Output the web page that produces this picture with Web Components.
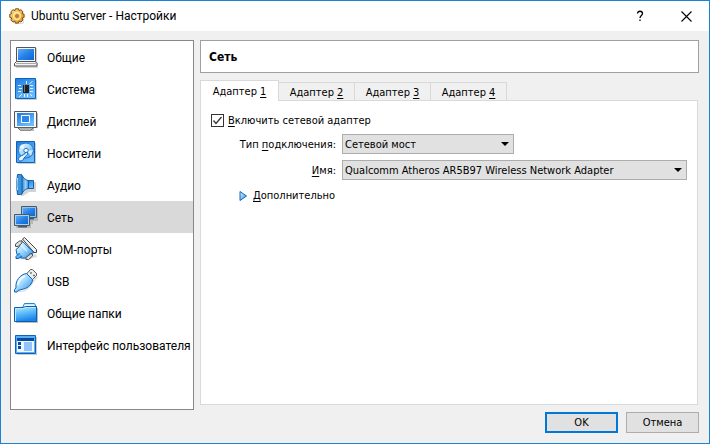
<!DOCTYPE html>
<html lang="ru">
<head>
<meta charset="utf-8">
<title>Ubuntu Server - Настройки</title>
<style>
html, body { height: 100%; margin: 0; }
body { font: 11px/14px "DejaVu Sans Condensed", "DejaVu Sans", sans-serif; color: #000; text-underline-offset: 2px; --ui-font: 12px/16px Roboto, "Noto Sans", sans-serif; }
</style>
</head>
<body>
<settings-window>
  <span slot="title">Ubuntu Server - Настройки</span>
  <nav-list slot="nav">
    <nav-item icon="general">Общие</nav-item>
    <nav-item icon="system">Система</nav-item>
    <nav-item icon="display">Дисплей</nav-item>
    <nav-item icon="storage">Носители</nav-item>
    <nav-item icon="audio">Аудио</nav-item>
    <nav-item icon="network" selected>Сеть</nav-item>
    <nav-item icon="serial">COM-порты</nav-item>
    <nav-item icon="usb">USB</nav-item>
    <nav-item icon="folder">Общие папки</nav-item>
    <nav-item icon="ui">Интерфейс пользователя</nav-item>
  </nav-list>
  <page-title>Сеть</page-title>
  <tab-panel>
    <tab-button slot="tabs" selected>Адаптер <u>1</u></tab-button>
    <tab-button slot="tabs">Адаптер <u>2</u></tab-button>
    <tab-button slot="tabs">Адаптер <u>3</u></tab-button>
    <tab-button slot="tabs">Адаптер <u>4</u></tab-button>
    <adapter-form></adapter-form>
  </tab-panel>
  <push-button slot="actions" primary>OK</push-button>
  <push-button slot="actions">Отмена</push-button>
</settings-window>

<script>
const ICONS = {
  gear: `<path fill="#bbb" d="M5 15h8l2-3v3l-2 1H6z" opacity=".6"/><g stroke="#7a4a12" stroke-width="1"><path fill="url(#o)" d="M6.500.8h3l.5 1.800 1.800-.9 2.200 2.100-.9 1.800 2 .6v3.200l-1.900.6.9 1.900-2.200 2.200-1.900-.9-.6 1.900h-3l-.6-1.900-1.800.9-2.200-2.200.9-1.900-1.900-.6V6.200l1.900-.6-.9-1.800L4 1.700l1.900.9z"/><circle cx="8" cy="8" r="3.400" fill="none" stroke="#ffe9a8" stroke-width="1.500"/><circle cx="8" cy="8" r="1.200" fill="#fff3cf"/></g>`,
  general: `<path fill="#b8b8b8" d="M3 3h20v14l1 1v5H2v-2h1z" opacity=".6"/><path d="M2.500 2.500h19v14h-19z" fill="#fff" stroke="#555"/><path d="M3.500 3.500h17v12h-17z" fill="#dce9f8"/><path d="M4 4h16v11H4z" fill="url(#b)"/><path d="M2.500 16.500h19l1.500 2v2.500H.5v-2.500z" fill="#f4f4f4" stroke="#555"/><path d="M2 18.500h20" stroke="#aaa"/>`,
  system: `<path d="M3 3h20v20H3z" fill="#ccc"/><path d="M1.500 1.500h20v20h-20z" fill="url(#s)" stroke="#0c62bd"/><path d="M9 8h6v8H9z" fill="#222"/><path d="M10 8h1v7h-1z" fill="#777"/><path d="M4 8.500h3M5 11.500h3M4 14.500h3M16 8.500h3M16 11.500h3M16 14.500h3M12.500 4v3M15.500 7l3-3M8 17l-3 3M10.500 17v3M13.500 17v3M16 17l2 2" stroke="#fff" fill="none" opacity=".85"/>`,
  display: `<path d="M2 4h22v15h-4v3H6v-3H2z" fill="#bbb"/><path d="M.5 2.500h22v16H.5z" fill="#f8f8f8" stroke="#555"/><path d="M3 4h17v13H3z" fill="url(#s)"/><path d="M7.500 6.500h8v7h-8z" fill="#2c86eb" stroke="#fff"/><path d="M4 19h15l-2 2H6z" fill="#fff" stroke="#666"/>`,
  storage: `<path d="M4 2h18v21H4z" fill="#ccc"/><path d="M2.500.5h18v21h-18z" fill="url(#s)" stroke="#0c62bd"/><circle cx="12" cy="9.500" r="7.500" fill="url(#l)" stroke="#2474c8"/><path d="M12 9L8 3l-3 3zM13 10l6-1-2 6z" fill="#fff" opacity=".7"/><circle cx="12" cy="9.500" r="2.200" fill="#fff" stroke="#2474c8"/><path d="M12 11c-1 3-4 3-6 4.500-2 1.500-2 4.500 0 4.500s3.500-1 4-3c1.500-2 3.500-3 4-5z" fill="#eaf6ff" stroke="#0c62bd"/>`,
  audio: `<path d="M4 3h5l6 6h7v10h-7l-6 4H7z" fill="#bbb" opacity=".65"/><path d="M13 7.500h6.500v8H13z" fill="url(#s)" stroke="#155fa9"/><path d="M7.500 1.500c2 4 4 5.500 7 6v8c-3 .5-5 2-7 6z" fill="url(#h)" stroke="#155fa9"/><path d="M3.500 1.500h3q1.500 0 1.500 2v16q0 2-1.500 2h-3q-2-10 0-20z" fill="#3c94dd" stroke="#155fa9"/><path d="M3.500 5q-1 7 0 12" stroke="#bfe3fb" fill="none"/>`,
  network: `<path d="M10 3h14v13h-5v3h-2v4H2V10h8z" fill="#777" opacity=".35"/><path d="M7.500 1.500h15v11h-15z" fill="#9ec0df" stroke="#3b5e7b"/><path d="M9 3h12v8H9z" fill="url(#b)"/><path d="M15 13.500h5" stroke="#3b5e7b" stroke-width="2"/><path d="M.5 9.500h15v11H.5z" fill="#b4cde4" stroke="#3b5e7b"/><path d="M2 11h12v8H2z" fill="url(#b)"/><path d="M4 21.500h9" stroke="#4a5a68" stroke-width="2"/>`,
  serial: `<path d="M3 22L22 17l1 3-4 1-5 2z" fill="#aaa" opacity=".4"/><path d="M8.500 2l2-1.500L22.500 12.500v3H20z" fill="#eee" stroke="#444"/><path d="M7.500 3.500L20 15.500l-5 2-2 3.500H7l-4-3.500-1-5 3.500-3z" fill="url(#l)" stroke="#0c5fae"/><path d="M5.500 16L2 19.500v2h2.500L8 19" fill="#59b2f1" stroke="#0c5fae"/><path d="M1.500 9.500V7l4-3h2.500v2L4 9.500zM12 20.500v2h2.500l4-3.500v-2h-2z" fill="#ddd" stroke="#555"/><path d="M7 8l6 6" stroke="#fff" stroke-width="2" opacity=".5"/>`,
  usb: `<path d="M3 22c8 1 13-4 15-10l5-5 1 1-5 6c-4 7-9 10-16 9z" fill="#aaa" opacity=".4"/><path d="M12.500 5l4-4.500h2l4 4v2l-4 4z" fill="#eee" stroke="#555"/><path d="M16.500 3.500l1 1M19.500 6l1 1" stroke="#444" stroke-width="1.500"/><path d="M12.500 4.500l6 6c0 4-4 8.500-9 9.500L4 21.500l-1 1.500H.5v-2.500L2 19c-1-7 4-13.500 10.500-14.500z" fill="url(#l)" stroke="#0c62bd"/><path d="M4 16c0-4 3-7 7-9" fill="none" stroke="#fff" stroke-width="2" opacity=".75"/>`,
  folder: `<path d="M2 7h22v15H2z" fill="#bbb"/><path d="M8.500 6.500l2-4h10l2 4v5h-14z" fill="#cceaff" stroke="#2584ce"/><path d="M10 6l1-2h9l1 2z" fill="#e9f8ff"/><path d="M.5 6.500h9l2-1h11v15H.5z" fill="url(#f)" stroke="#0c5fae"/><path d="M1.500 20V7.500H10l2-1h9.500" fill="none" stroke="#bdeaff"/>`,
  ui: `<path d="M3 4h20v18H3z" fill="#ccc"/><path d="M1.500 2.500h20v18h-20z" fill="#5aaef2" stroke="#0c62bd"/><path d="M3 5h17v14H3z" fill="#eef7ff"/><path d="M3 5h17v3H3z" fill="#084b9f"/><path d="M4 9h3v3H4zM4 13h3v3H4z" fill="#084b9f"/><path d="M10 9h8v9h-8z" fill="#93c3fb"/>`
};
const DEFS = `<defs>
<linearGradient id="b" x2="1" y2="1"><stop stop-color="#62abf1"/><stop offset=".5" stop-color="#2682ea"/><stop offset="1" stop-color="#0a67d4"/></linearGradient>
<linearGradient id="s" x2=".6" y2="1"><stop stop-color="#1d7be0"/><stop offset="1" stop-color="#6cbcfb"/></linearGradient>
<linearGradient id="l" x2="1" y2="1"><stop stop-color="#fff"/><stop offset=".45" stop-color="#a7dcff"/><stop offset="1" stop-color="#218be3"/></linearGradient>
<linearGradient id="h" x2="1"><stop stop-color="#1d76c9"/><stop offset=".6" stop-color="#9ad6fa"/><stop offset="1" stop-color="#2c89da"/></linearGradient>
<linearGradient id="f" x2=".3" y2="1"><stop stop-color="#c5f0ff"/><stop offset=".5" stop-color="#62bdf9"/><stop offset="1" stop-color="#1a86ec"/></linearGradient>
<linearGradient id="o" x2="1" y2="1"><stop stop-color="#ffe08a"/><stop offset="1" stop-color="#e58a12"/></linearGradient></defs>`;

function define(name, render) {
  customElements.define(name, class extends HTMLElement {
    constructor() { super(); this.attachShadow({ mode: "open" }); }
    connectedCallback() { this.shadowRoot.innerHTML = render(this); }
  });
}

define("app-icon", el => {
  const n = el.getAttribute("name"), s = n === "gear" ? 16 : 24;
  return `<style>:host{display:block;flex:none;width:${s}px;height:${s}px}svg{display:block}</style>
  <svg width="${s}" height="${s}" viewBox="0 0 ${s} ${s}" aria-hidden="true">${DEFS}${ICONS[n]}</svg>`;
});

define("settings-window", () => `<style>
  :host{box-sizing:border-box;display:grid;grid-template-rows:30px 1fr auto;min-height:100%;border:1px solid #1883d7;background:#f0f0f0}
  header{display:flex;align-items:center;gap:6px;padding:0 8px;background:#fff;font:var(--ui-font)}
  .title{flex:1}
  header button{width:46px;height:28px;padding:0;border:0;background:none;display:grid;place-items:center}
  .controls{display:flex;margin-right:-8px}
  main{display:grid;grid-template-columns:184px minmax(0,1fr);gap:6px;padding:9px 10px 0 9px}
  .page{display:flex;flex-direction:column;gap:7px}
  ::slotted(tab-panel){flex:1}
  ::slotted([slot=nav]){margin-bottom:-5px}
  footer{display:flex;justify-content:flex-end;gap:8px;padding:7px 10px 10px}
  </style>
  <header><app-icon name="gear"></app-icon><span class="title"><slot name="title"></slot></span>
    <span class="controls"><button aria-label="Справка"><svg width="8" height="12" viewBox="0 0 8 12"><path d="M1.500 3.500c0-3 5-3 5 0 0 2-2.500 2-2.500 4.500M4 9.500v1.500" fill="none" stroke="#000" stroke-width="1.300"/></svg></button>
    <button aria-label="Закрыть"><svg width="11" height="11" viewBox="0 0 11 11"><path d="M.5.5l10 10M10.500.5l-10 10" stroke="#000" stroke-width="1.100"/></svg></button></span></header>
  <main><slot name="nav"></slot><div class="page"><slot></slot></div></main>
  <footer><slot name="actions"></slot></footer>`);

define("nav-list", () => `<style>
  :host{display:block;border:1px solid #828790;background:#fff}
  nav{display:flex;flex-direction:column}
  </style><nav><slot></slot></nav>`);

define("nav-item", el => `<style>
  :host{display:block}
  button{display:flex;align-items:center;gap:9px;width:100%;height:32px;padding:0 0 0 3px;border:0;background:none;color:inherit;font:var(--ui-font);text-align:left;white-space:nowrap}
  span{padding-top:2px}
  :host([selected]) button{background:#d9d9d9}
  </style><button><app-icon name="${el.getAttribute("icon")}"></app-icon><span><slot></slot></span></button>`);

define("page-title", () => `<style>
  :host{display:block;border:1px solid #a0a0a0;background:#fff;padding:2px 8px 0}
  h1{margin:0;font:bold 12px/29px "DejaVu Sans Condensed","DejaVu Sans",sans-serif}
  </style><h1><slot></slot></h1>`);

define("tab-panel", () => `<style>
  :host{display:flex;flex-direction:column;margin-right:1px}
  .tabs{display:flex;align-items:flex-end}
  section{flex:1;border:1px solid #d9d9d9;background:#fff;margin-top:-1px}
  </style><div class="tabs" role="tablist"><slot name="tabs"></slot></div><section role="tabpanel"><slot></slot></section>`);

define("tab-button", el => `<style>
  :host{display:block}
  button{height:19px;width:76px;padding:2px 0 0;border:1px solid #d9d9d9;border-left:0;background:#f0f0f0;color:inherit;font:inherit}
  :host([selected]){position:relative}
  :host([selected]) button{width:79px;height:21px;padding:1px 0 0;border-left:1px solid #d9d9d9;border-bottom:0;background:#fff}
  </style><button role="tab" aria-selected="${el.hasAttribute("selected")}"><slot></slot></button>`);

define("adapter-form", () => `<style>
  :host{display:block;padding:10px}
  .check{display:flex;align-items:center;gap:4px;height:18px}
  .check>span:last-child{padding-top:1px}
  .box{display:grid;width:13px;height:13px}
  .box>*{grid-area:1/1}
  input{appearance:none;box-sizing:border-box;width:13px;height:13px;margin:0;border:1px solid #333;background:#fff}
  .box svg{pointer-events:none}
  input:not(:checked)+svg{display:none}
  .grid{display:grid;grid-template-columns:125px minmax(0,1fr);column-gap:6px;row-gap:6px;align-items:center;margin-top:5px}
  .grid>label{text-align:right;padding-top:2px}
  .select{display:grid;grid-template-columns:1fr 13px;align-items:center}
  .short{width:172px}
  select{grid-area:1/1/2/3;appearance:none;box-sizing:border-box;width:100%;height:20px;padding:1px 20px 0 2px;border:1px solid #adadad;border-radius:0;background:#e1e1e1;color:inherit;font:inherit}
  .select svg{grid-area:1/2;pointer-events:none}
  .more{display:flex;align-items:center;gap:5px;margin:8px 0 0 28px;padding:0;border:0;background:none;color:inherit;font:inherit}
  .more span{padding-top:1px}
  </style>
  <label class="check"><span class="box"><input type="checkbox" checked><svg width="13" height="13" viewBox="0 0 13 13"><path d="M2.500 6.500l2.500 3 5.500-6.500" fill="none" stroke="#333" stroke-width="1.300"/></svg></span><span><u>В</u>ключить сетевой адаптер</span></label>
  <div class="grid">
    <label for="type">Тип <u>п</u>одключения:</label>
    <div class="select short"><select id="type"><option>Сетевой мост</option></select><svg width="8" height="4" viewBox="0 0 8 4"><path d="M0 0h8L4 4z"/></svg></div>
    <label for="name"><u>И</u>мя:</label>
    <div class="select name"><select id="name"><option>Qualcomm Atheros AR5B97 Wireless Network Adapter</option></select><svg width="8" height="4" viewBox="0 0 8 4"><path d="M0 0h8L4 4z"/></svg></div>
  </div>
  <button class="more" aria-expanded="false"><svg width="9" height="12" viewBox="0 0 9 12"><defs><linearGradient id="g" y2="1"><stop stop-color="#e0f4ff"/><stop offset="1" stop-color="#2590e5"/></linearGradient></defs><path d="M1 1.500v9L7.500 6z" fill="url(#g)" stroke="#1567b5"/></svg><span><u>Д</u>ополнительно</span></button>`);

define("push-button", () => `<style>
  :host{display:block}
  button{box-sizing:border-box;width:73px;height:21px;padding:0;border:1px solid #adadad;background:#e1e1e1;color:inherit;font:inherit}
  :host([primary]) button{border:2px solid #0078d7}
  </style><button><slot></slot></button>`);
</script>
</body>
</html>
